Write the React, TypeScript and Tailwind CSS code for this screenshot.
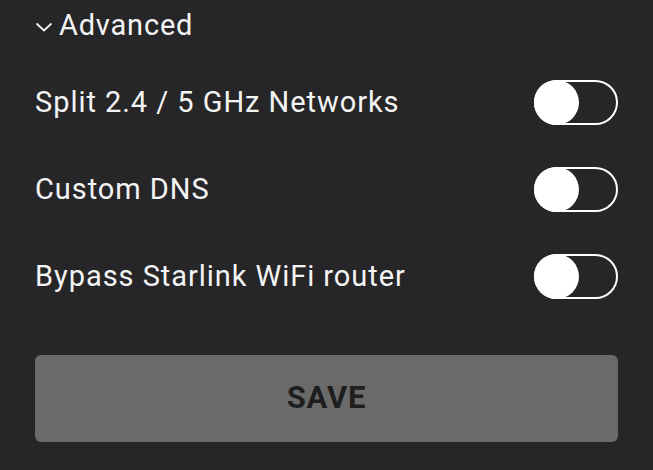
import React from 'react';

const rows = ['Split 2.4 / 5 GHz Networks', 'Custom DNS', 'Bypass Starlink WiFi router'];

function Toggle() {
  return (
    <div className="relative w-[84px] h-[45px] rounded-full border-2 border-white bg-[#262628] shrink-0">
      <div className="absolute -left-[2px] -top-[2px] w-[45px] h-[45px] rounded-full bg-white" />
    </div>
  );
}

export default function App() {
  return (
    <div className="w-[653px] h-[470px] bg-[#262628] text-[#f4f4f4] font-['Roboto',sans-serif] px-[35px] overflow-hidden">
      <div className="flex items-center gap-[6px] h-[51px]">
        <svg width="18" height="10" viewBox="0 0 18 10" className="mt-[2px]">
          <path d="M1.5 1.5 L9 8.5 L16.5 1.5" fill="none" stroke="#f4f4f4" strokeWidth="1.8" />
        </svg>
        <span className="text-[29px] tracking-[0.8px]">Advanced</span>
      </div>
      <div className="flex flex-col mt-[8px]">
        {rows.map((r) => (
          <div key={r} className="flex items-center justify-between h-[87px]">
            <span className="text-[29px] tracking-[0.95px]">{r}</span>
            <Toggle />
          </div>
        ))}
      </div>
      <button className="mt-[35px] w-full h-[87px] rounded-[6px] bg-[#6a6a6b] text-[#1e1e1f] font-bold text-[31px] tracking-[0.8px] flex items-center justify-center">
        SAVE
      </button>
    </div>
  );
}
